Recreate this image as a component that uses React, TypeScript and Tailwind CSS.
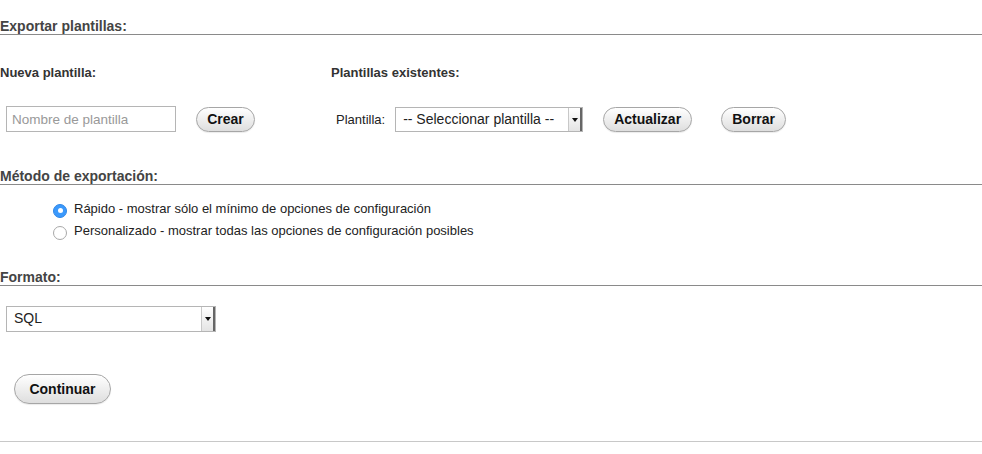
import React from "react";

// ── Small pieces ─────────────────────────────────────────────────

function SectionTitle({ children, className = "" }: { children: React.ReactNode; className?: string }) {
  return (
    <h2 className={`text-[14px] font-bold leading-[16px] text-[#444] border-b border-[#8a8a8a] ${className}`}>
      {children}
    </h2>
  );
}

function PillButton({ children, className = "" }: { children: React.ReactNode; className?: string }) {
  return (
    <button
      type="button"
      className={`rounded-full border border-[#a6a6a6] bg-gradient-to-b from-white to-[#dedede] text-[14px] font-bold text-[#111] shadow-[0_1px_1px_rgba(0,0,0,0.08)] ${className}`}
    >
      {children}
    </button>
  );
}

function FakeSelect({ label, className = "" }: { label: string; className?: string }) {
  return (
    <div className={`flex items-stretch border border-[#b5b5b5] bg-white ${className}`}>
      <span className="flex-1 pl-[7px] text-[14px] leading-[23px] text-[#222] whitespace-nowrap overflow-hidden">
        {label}
      </span>
      <span className="w-[14px] flex items-center justify-center border-l border-[#c8c8c8] border-r-2 border-r-[#666] bg-gradient-to-b from-white to-[#e4e4e4]">
        <span className="w-0 h-0 border-l-[3px] border-r-[3px] border-t-[4px] border-l-transparent border-r-transparent border-t-[#111]" />
      </span>
    </div>
  );
}

function Radio({ checked, label }: { checked?: boolean; label: string }) {
  return (
    <label className="flex items-center h-[22px] gap-[7px] text-[13px] text-[#222]">
      {checked ? (
        <span className="mt-[3px] w-[14px] h-[14px] rounded-full bg-[#3b99fc] border border-[#2f86e6] flex items-center justify-center">
          <span className="w-[5px] h-[5px] rounded-full bg-white" />
        </span>
      ) : (
        <span className="mt-[3px] w-[14px] h-[14px] rounded-full bg-white border border-[#a8a8a8]" />
      )}
      <span>{label}</span>
    </label>
  );
}

// ── Main ─────────────────────────────────────────────────────────

export default function App() {
  return (
    <div className="w-[982px] h-[454px] bg-white overflow-hidden font-['Liberation_Sans',Arial,sans-serif]">
      {/* Exportar plantillas */}
      <SectionTitle className="mt-[18px]">Exportar plantillas:</SectionTitle>

      <div className="flex mt-[30px]">
        <div className="w-[331px] shrink-0">
          <h3 className="text-[13px] font-bold leading-[16px] text-[#333]">Nueva plantilla:</h3>
          <div className="flex items-start mt-[25px]">
            <input
              placeholder="Nombre de plantilla"
              className="ml-[6px] w-[170px] h-[26px] border border-[#b5b5b5] px-[5px] text-[13.5px] placeholder:text-[#999] outline-none"
            />
            <PillButton className="ml-[20px] mt-[1px] w-[59px] h-[25px]">Crear</PillButton>
          </div>
        </div>
        <div>
          <h3 className="text-[13px] font-bold leading-[16px] text-[#333]">Plantillas existentes:</h3>
          <div className="flex items-start mt-[26px]">
            <span className="ml-[5px] text-[13px] leading-[25px] text-[#222]">Plantilla:</span>
            <FakeSelect label="-- Seleccionar plantilla --" className="ml-[10px] w-[188px] h-[25px]" />
            <PillButton className="ml-[20px] w-[89px] h-[25px]">Actualizar</PillButton>
            <PillButton className="ml-[29px] w-[65px] h-[25px]">Borrar</PillButton>
          </div>
        </div>
      </div>

      {/* Método de exportación */}
      <SectionTitle className="mt-[36px]">Método de exportación:</SectionTitle>
      <div className="mt-[13px] pl-[53px]">
        <Radio checked label="Rápido - mostrar sólo el mínimo de opciones de configuración" />
        <Radio label="Personalizado - mostrar todas las opciones de configuración posibles" />
      </div>

      {/* Formato */}
      <SectionTitle className="mt-[27px]">Formato:</SectionTitle>
      <FakeSelect label="SQL" className="mt-[20px] ml-[6px] w-[210px] h-[26px]" />

      <PillButton className="mt-[42px] ml-[14px] w-[97px] h-[30px]">Continuar</PillButton>

      <div className="mt-[37px] border-t border-[#c8c8c8]" />
    </div>
  );
}
